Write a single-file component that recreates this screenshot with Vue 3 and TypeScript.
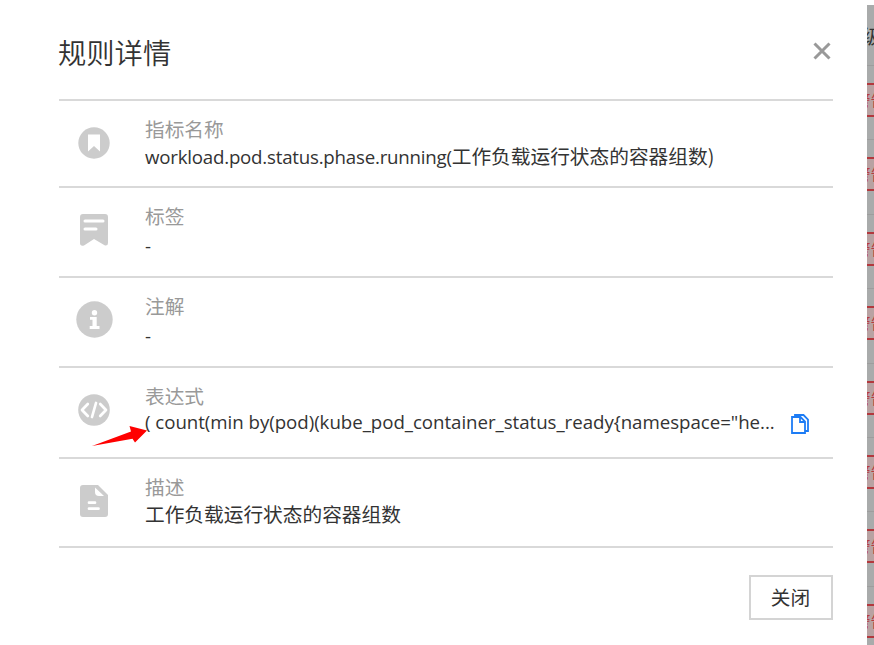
<script setup lang="ts">
interface Rule {
  icon: 'mark' | 'tag' | 'info' | 'code' | 'doc'
  label: string
  latin?: string
  cjk?: string
  height: number
  copy?: boolean
}

const rules: Rule[] = [
  { icon: 'mark', label: '指标名称', latin: 'workload.pod.status.phase.running(', cjk: '工作负载运行状态的容器组数)', height: 87 },
  { icon: 'tag', label: '标签', latin: '-', height: 90 },
  { icon: 'info', label: '注解', latin: '-', height: 90 },
  { icon: 'code', label: '表达式', latin: '( count(min by(pod)(kube_pod_container_status_ready{namespace="he...', height: 91, copy: true },
  { icon: 'doc', label: '描述', cjk: '工作负载运行状态的容器组数', height: 88.5 },
]
</script>

<template>
  <div class="screen">
    <section class="dialog">
      <header class="head">
        <h1>规则详情</h1>
        <svg class="close" width="18" height="18" viewBox="0 0 18 18"><path d="M1.5 1.5 16.5 16.5M16.5 1.5 1.5 16.5" /></svg>
      </header>
      <ul class="rules">
        <li v-for="r in rules" :key="r.label" :class="['rule', r.icon]" :style="{ height: r.height + 'px' }">
          <div class="icon">
            <svg v-if="r.icon === 'mark'" width="32" height="32" viewBox="0 0 32 32">
              <circle cx="16" cy="16" r="15.7" fill="#ccc" />
              <path d="M10 7.5H22V24.5L16 19 10 24.5Z" fill="#fff" />
            </svg>
            <svg v-else-if="r.icon === 'tag'" width="28" height="32" viewBox="0 0 28 32">
              <path d="M3 0H25Q28 0 28 3V29Q28 32 25 31.5L14 25 4 31.5Q0 32.5 0 29V3Q0 0 3 0Z" fill="#ccc" />
              <path d="M5 7H23M5 15H16" stroke="#fff" stroke-width="3" stroke-linecap="round" />
            </svg>
            <svg v-else-if="r.icon === 'info'" width="37" height="37" viewBox="0 0 37 37">
              <circle cx="18.5" cy="18.5" r="18.2" fill="#ccc" />
              <circle cx="18.5" cy="11.7" r="2.7" fill="#fff" />
              <path d="M14 16H20.7V25H23.5V28H13.7V25H16.5V18.7H14Z" fill="#fff" />
            </svg>
            <svg v-else-if="r.icon === 'code'" width="32" height="32" viewBox="0 0 32 32">
              <circle cx="16" cy="16" r="15.8" fill="#ccc" />
              <path d="M9.8 10 4 16 9.8 22M22.2 10 28 16 22.2 22M18 9 14 23" fill="none" stroke="#fff" stroke-width="2.7" stroke-linecap="round" stroke-linejoin="round" />
            </svg>
            <svg v-else width="28" height="32" viewBox="0 0 28 32">
              <path d="M3 0H18L28 10V29Q28 32 25 32H3Q0 32 0 29V3Q0 0 3 0Z" fill="#ccc" />
              <path d="M15 2.5V7Q15 11 19 11H24" fill="#fff" />
              <path d="M9 17.7H15M9 23.7H18.5" stroke="#fff" stroke-width="2.7" stroke-linecap="round" />
            </svg>
          </div>
          <div class="text">
            <div class="label">{{ r.label }}</div>
            <div class="value"><span v-if="r.latin" class="latin">{{ r.latin }}</span><span v-if="r.cjk">{{ r.cjk }}</span></div>
          </div>
          <svg v-if="r.copy" class="copy" width="18" height="20" viewBox="0 0 18 20">
            <path d="M4 3V1H12.5L17 5.5V17H14M1 3H9.5L14 7.5V19H1ZM9 3V8H14" />
          </svg>
          <svg v-if="r.copy" class="arrow" width="55" height="20" viewBox="0 0 55 20">
            <path d="M0 20 39 5.5 37.5 0 55 4.5 43 16.5 40.5 12.7Z" fill="#f00" />
          </svg>
        </li>
      </ul>
      <footer class="foot"><button type="button">关闭</button></footer>
    </section>
    <aside class="backdrop">
      <div class="column-head"><span>级</span></div>
      <div v-for="n in 8" :key="n" class="cell"><div class="chip"><span>警告</span></div></div>
    </aside>
  </div>
</template>

<style>
body {
  margin: 0;
  overflow: hidden;
  background: #fff;
}
</style>

<style scoped>
* {
  box-sizing: border-box;
}
.screen {
  display: flex;
  width: 874px;
  height: 645px;
  overflow: hidden;
  font-family: "Open Sans", "Noto Sans CJK SC", sans-serif;
  color: #333;
}
.dialog {
  width: 867px;
  flex: none;
  padding: 0 34px 0 59px;
}
.head {
  display: flex;
  justify-content: space-between;
  height: 99px;
}
h1 {
  margin: 32px 0 0 -1px;
  font: 350 28.3px/40px "Noto Sans CJK SC", sans-serif;
}
.close {
  margin: 42px 2px 0 0;
  fill: none;
  stroke: #999;
  stroke-width: 3;
}
.rules {
  list-style: none;
  margin: 0;
  padding: 0;
  border-top: 2px solid #d9d9d9;
}
.rule {
  position: relative;
  display: flex;
  border-bottom: 2px solid #d9d9d9;
}
.icon {
  display: flex;
  align-items: center;
  justify-content: center;
  width: 70px;
  height: 83px;
}
.text {
  width: 638px;
  padding: 14px 0 0 16px;
  font: 19.7px/27px "Noto Sans CJK SC", sans-serif;
  white-space: nowrap;
}
.label {
  color: #999;
}
.latin {
  font-family: "Open Sans", sans-serif;
  font-size: 18.7px;
}
.mark .latin {
  letter-spacing: -0.22px;
}
.code .latin {
  letter-spacing: -0.04px;
}
.tag .value,
.info .value {
  padding-top: 2px;
}
.code .value {
  line-height: 24px;
}
.copy {
  margin: 46px 0 0 24px;
  fill: none;
  stroke: #1d7cf5;
  stroke-width: 1.8;
}
.arrow {
  position: absolute;
  left: 33px;
  top: 58px;
}
.foot {
  display: flex;
  justify-content: flex-end;
  padding-top: 27.5px;
}
button {
  width: 84px;
  height: 45px;
  padding: 0 1px 2px 0;
  border: 2px solid #d4d4d4;
  background: #fff;
  color: #333;
  font: 19.7px/39px "Noto Sans CJK SC", sans-serif;
}
.backdrop {
  width: 7px;
  height: 640px;
  margin-top: 5px;
  overflow: hidden;
  background: #a9abab;
  font-family: "Noto Sans CJK SC", sans-serif;
}
.column-head {
  display: flex;
  justify-content: flex-end;
  width: 7px;
  height: 61px;
  padding-top: 17px;
  border-bottom: 1px solid #9d9d9d;
  font-size: 19px;
  line-height: 28px;
}
.column-head span {
  margin-right: -7px;
}
.cell {
  height: 74.4px;
  padding-top: 17px;
  border-bottom: 1px solid #9d9d9d;
}
.chip {
  display: flex;
  justify-content: center;
  height: 34px;
  border: solid #b3383d;
  border-width: 2px 0;
  background: #b8a2a2;
  color: #b73a40;
  font-size: 16px;
  line-height: 29px;
  white-space: nowrap;
}
</style>
